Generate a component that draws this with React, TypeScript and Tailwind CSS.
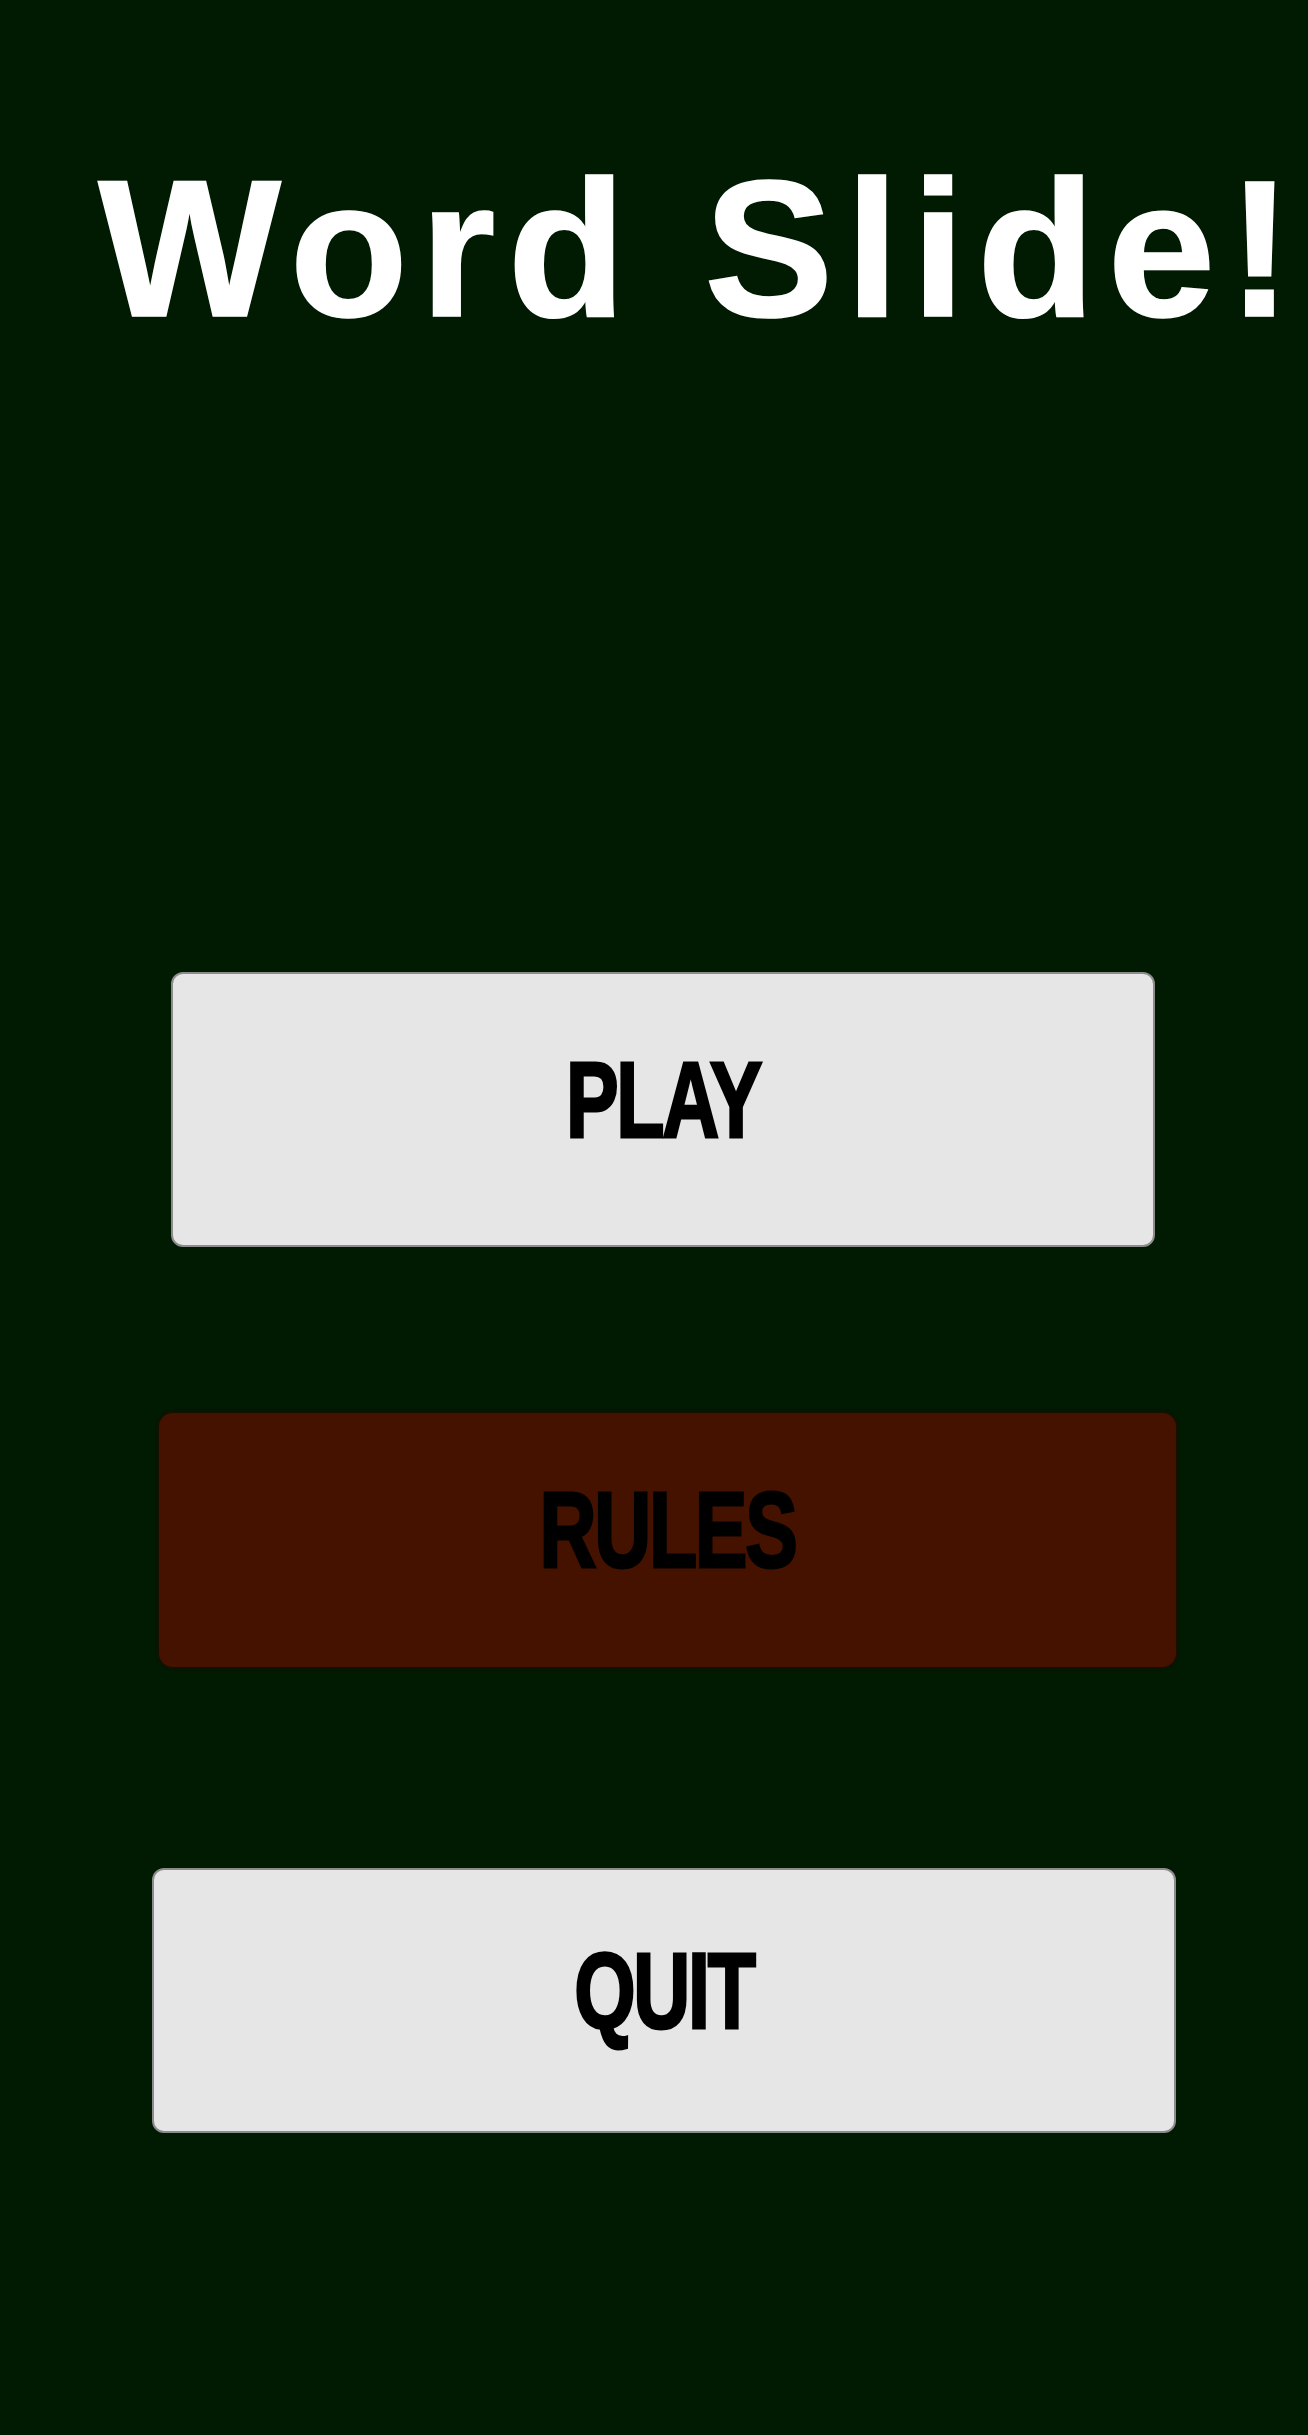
import React from "react";

const btnText =
  "block font-['Liberation_Sans',Arial,sans-serif] font-bold text-[108px] leading-none tracking-[-3px] text-black scale-x-[0.73] [-webkit-text-stroke:3px_black] select-none";

export default function App() {
  return (
    <div className="min-h-[2435px] w-full bg-[#011a02] overflow-hidden flex flex-col">
      <h1 className="mt-[152px] pl-[94px] text-center font-['Liberation_Sans',Arial,sans-serif] font-bold text-[194px] leading-none tracking-[12px] text-white [-webkit-text-stroke:1.5px_white] whitespace-nowrap">
        Word Slide!
      </h1>

      <button className="mt-[626px] ml-[171px] mr-[153px] h-[275px] rounded-[12px] border-2 border-[#8c8c8c] bg-[#e6e6e6] flex justify-center items-start pt-[72px]">
        <span className={btnText}>PLAY</span>
      </button>

      <button className="mt-[166px] ml-[159px] mr-[132px] h-[254px] rounded-[14px] bg-[#451200] shadow-[0_0_3px_1px_rgba(40,10,0,0.9)] flex justify-center items-start pt-[63px]">
        <span className={btnText}>RULES</span>
      </button>

      <button className="mt-[201px] ml-[152px] mr-[132px] h-[265px] rounded-[12px] border-2 border-[#8c8c8c] bg-[#e6e6e6] flex justify-center items-start pt-[67px]">
        <span className={btnText}>QUIT</span>
      </button>
    </div>
  );
}
